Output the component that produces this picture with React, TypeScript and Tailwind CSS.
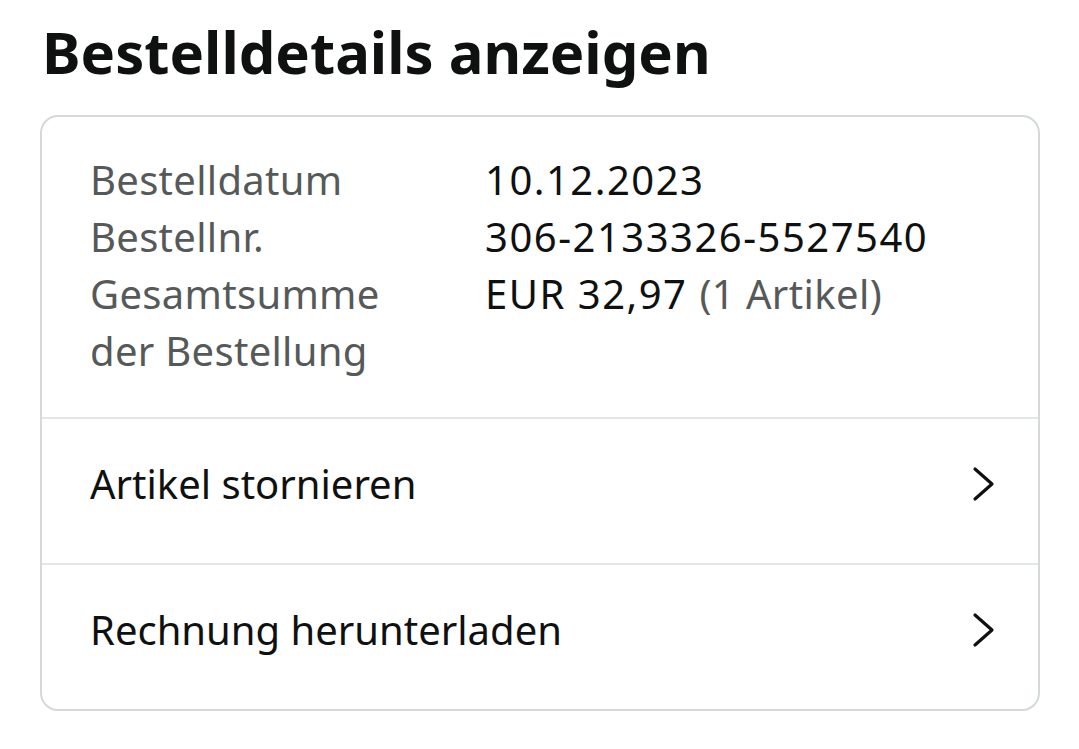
import React from 'react';

const rows = [
  { label: 'Bestelldatum', value: <>10.12.2023</> },
  { label: 'Bestellnr.', value: <>306-2133326-5527540</> },
  {
    label: 'Gesamtsumme der Bestellung',
    value: (
      <>
        EUR 32,97 <span className="text-[#565959] tracking-[0.4px]">(1 Artikel)</span>
      </>
    ),
  },
];

const actions = ['Artikel stornieren', 'Rechnung herunterladen'];

function Chevron() {
  return (
    <svg width="28" height="36" viewBox="0 0 28 36" fill="none" className="shrink-0">
      <path d="M5 3 L22 18 L5 33" stroke="#0f1111" strokeWidth="3.2" strokeLinecap="round" strokeLinejoin="round" />
    </svg>
  );
}

export default function App() {
  return (
    <div className="min-h-screen bg-white px-10 pt-[13px] font-['Noto_Sans',sans-serif] text-[#0f1111]">
      <h1 className="text-[58px] font-bold leading-[78px] pl-[2px]">Bestelldetails anzeigen</h1>

      {/* order card */}
      <div className="mt-[24px] w-[1000px] rounded-[18px] border-2 border-[#d5d9d9]">
        <div className="px-[48px] pt-[34px] pb-[38px] text-[40px] leading-[57px]">
          {rows.map((r) => (
            <div key={r.label} className="flex">
              <div className="w-[395px] shrink-0">
                <div className="w-[300px] text-[#565959] tracking-[0.3px]">{r.label}</div>
              </div>
              <div className="tracking-[1.5px]">{r.value}</div>
            </div>
          ))}
        </div>
        {actions.map((a) => (
          <div key={a} className="flex h-[146px] items-center justify-between border-t-2 border-[#e3e6e6] pb-[14px] pl-[48px] pr-[40px]">
            <span className="text-[40px]">{a}</span>
            <Chevron />
          </div>
        ))}
      </div>
    </div>
  );
}
